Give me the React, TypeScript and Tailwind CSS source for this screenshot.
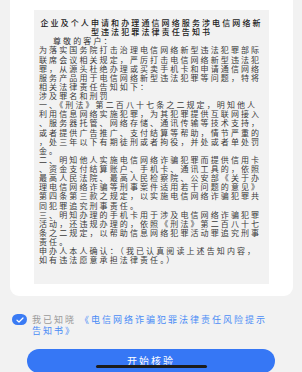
import React from "react";

const titleLines = ["企业及个人申请和办理通信网络服务涉电信网络新", "型违法犯罪法律责任告知书"];

const bodyLines = [
  "为落实国务院打击治理电信网络新型违法犯罪部际",
  "联席会议相关规定，严厉打击电信网络新型违法犯",
  "罪，从源头杜绝办理或买卖手机卡和申请通信网络",
  "服务产品用于电信网络新型违法犯罪等问题，特将",
  "相关法律责任告知如下：",
  "涉及罪名和刑罚",
  "一、《刑法》第二百八十七条之二规定，明知他人",
  "利用信息网络实施犯罪，为其犯罪提供互联网接入",
  "、服务器托管、网络存储、通讯传输等技术支持，",
  "或者提供广告推广、支付结算等帮助，情节严重的",
  "，处三年以下有期徒刑或者拘役，并处或者单处罚",
  "金。",
  "二、明知他人实施电信网络诈骗犯罪而提供信用卡",
  "、资金支付结算账户、手机卡、通讯工具的，依照",
  "最高人民法院、最高人民检察院、公安部《关于办",
  "理电信网络诈骗等刑事案件适用若干问题的意见》",
  "第四条第三款之规定，以实施电信网络诈骗犯罪共",
  "同犯罪追究刑事责任。",
  "三、明知办理的手机卡用于涉及电信网络诈骗犯罪",
  "活动，还违规办理的，依照《刑法》第二百八十七",
  "条之二规定，以帮助信息网络犯罪活动罪追究刑事",
  "责任。",
  "申办人本人确认：（我已认真阅读上述告知内容，",
  "如有违法愿意承担法律责任。）",
];

export default function App() {
  return (
    <div
      className="relative h-[372px] w-[302px] overflow-hidden bg-[#f2f2f2]"
      style={{ fontFamily: '"Noto Sans CJK SC", "Noto Sans", sans-serif' }}
    >
      {/* notice card */}
      <div className="ml-[10px] mr-[9px] rounded-b-[9px] bg-white px-[24px] pt-[10px] pb-[12px]">
        <div className="bg-[#f2f2f2] px-[5px] pt-[8px] pb-[20px] text-[8px] leading-[9.12px] tracking-[2.1px] text-[#3a3a3a]">
          {titleLines.map((line) => (
            <div key={line} className="whitespace-nowrap text-center font-medium text-[#222]">
              {line}
            </div>
          ))}
          <div className="whitespace-nowrap pl-[14px]">尊敬的客户：</div>
          {bodyLines.map((line, i) => (
            <div key={i} className="whitespace-nowrap">
              {line}
            </div>
          ))}
        </div>
      </div>

      {/* agreement */}
      <div className="mt-[18px] flex items-start pl-[12px] pr-[8px]">
        <div className="flex h-[11px] w-[15px] shrink-0 items-center justify-center rounded-full bg-[#3a7bf4]">
          <svg width="8" height="6" viewBox="0 0 8 6" fill="none">
            <path d="M1 3.2 L3 5 L7 1" stroke="white" strokeWidth="1.2" strokeLinecap="round" strokeLinejoin="round" />
          </svg>
        </div>
        <div className="ml-[5px] text-[9px] leading-[11px] tracking-[2px]">
          <div className="whitespace-nowrap">
            <span className="text-[#9a9a9a]">我已知晓 </span>
            <span className="text-[#4a8cf6]">《电信网络诈骗犯罪法律责任风险提示</span>
          </div>
          <div className="whitespace-nowrap text-[#4a8cf6]">告知书》</div>
        </div>
      </div>

      {/* button */}
      <div className="mt-[13px] px-[27px]">
        <button
          type="button"
          className="flex h-[24px] w-full items-center justify-center rounded-full bg-[#3677f5] text-[10px] leading-none tracking-[2px] text-white"
        >
          开始核验
        </button>
      </div>

      {/* home indicator */}
      <div className="absolute left-[96px] top-[365px] h-[3px] w-[111px] rounded-full bg-[#1c1c1c]" />
    </div>
  );
}
